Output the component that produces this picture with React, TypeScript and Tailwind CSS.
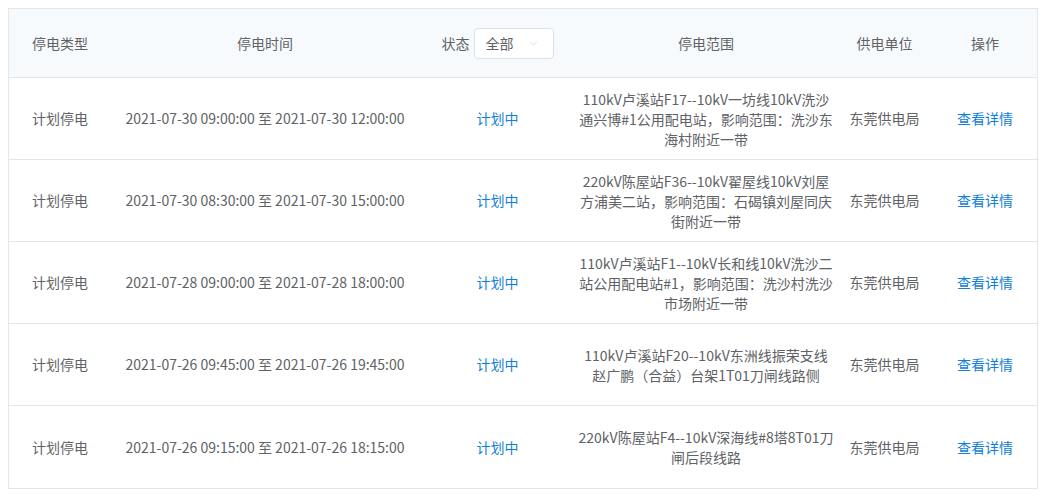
import { ChevronDown } from 'lucide-react';

type Row = {
  type: string;
  time: string;
  status: string;
  scope: string[];
  unit: string;
};

const ROWS: Row[] = [
  {
    type: '计划停电',
    time: '2021-07-30 09:00:00 至 2021-07-30 12:00:00',
    status: '计划中',
    scope: ['110kV卢溪站F17--10kV一坊线10kV洗沙', '通兴博#1公用配电站，影响范围：洗沙东', '海村附近一带'],
    unit: '东莞供电局',
  },
  {
    type: '计划停电',
    time: '2021-07-30 08:30:00 至 2021-07-30 15:00:00',
    status: '计划中',
    scope: ['220kV陈屋站F36--10kV翟屋线10kV刘屋', '方浦美二站，影响范围：石碣镇刘屋同庆', '街附近一带'],
    unit: '东莞供电局',
  },
  {
    type: '计划停电',
    time: '2021-07-28 09:00:00 至 2021-07-28 18:00:00',
    status: '计划中',
    scope: ['110kV卢溪站F1--10kV长和线10kV洗沙二', '站公用配电站#1，影响范围：洗沙村洗沙', '市场附近一带'],
    unit: '东莞供电局',
  },
  {
    type: '计划停电',
    time: '2021-07-26 09:45:00 至 2021-07-26 19:45:00',
    status: '计划中',
    scope: ['110kV卢溪站F20--10kV东洲线振荣支线', '赵广鹏（合益）台架1T01刀闸线路侧'],
    unit: '东莞供电局',
  },
  {
    type: '计划停电',
    time: '2021-07-26 09:15:00 至 2021-07-26 18:15:00',
    status: '计划中',
    scope: ['220kV陈屋站F4--10kV深海线#8塔8T01刀', '闸后段线路'],
    unit: '东莞供电局',
  },
];

const COLS = 'grid grid-cols-[102px_308px_157px_260px_97px_104px]';

function App() {
  return (
    <div className="min-h-screen bg-white p-2 text-[14px] text-[#606266] font-['Microsoft_YaHei','Noto_Sans_CJK_SC',sans-serif]">
      <div className="w-[1030px] border border-[#e6e6e6]">
        {/* header */}
        <div className={`${COLS} h-[69px] items-center bg-[#f7fafd] border-b border-[#e6e6e6] text-center`}>
          <div>停电类型</div>
          <div>停电时间</div>
          <div className="flex items-center justify-center gap-[4px]">
            <span>状态</span>
            <div className="flex items-center justify-between w-[80px] h-[31px] rounded-[4px] border border-[#dcdfe6] bg-white pl-[11px] pr-[13px]">
              <span className="text-[#606266]">全部</span>
              <ChevronDown className="w-[13px] h-[13px] text-[#c0c4cc]" strokeWidth={1} />
            </div>
          </div>
          <div>停电范围</div>
          <div>供电单位</div>
          <div>操作</div>
        </div>

        {/* rows */}
        {ROWS.map((r, i) => (
          <div
            key={i}
            className={`${COLS} h-[82px] items-center text-center ${i < ROWS.length - 1 ? 'border-b border-[#e6e6e6]' : ''}`}
          >
            <div>{r.type}</div>
            <div className="whitespace-nowrap">{r.time}</div>
            <div className="text-[#0f80d9]">{r.status}</div>
            <div className="leading-[20px]">
              {r.scope.map((line, j) => (
                <div key={j} className="whitespace-nowrap">{line}</div>
              ))}
            </div>
            <div>{r.unit}</div>
            <div className="text-[#0f80d9] cursor-pointer">查看详情</div>
          </div>
        ))}
      </div>
    </div>
  );
}

export default App;
